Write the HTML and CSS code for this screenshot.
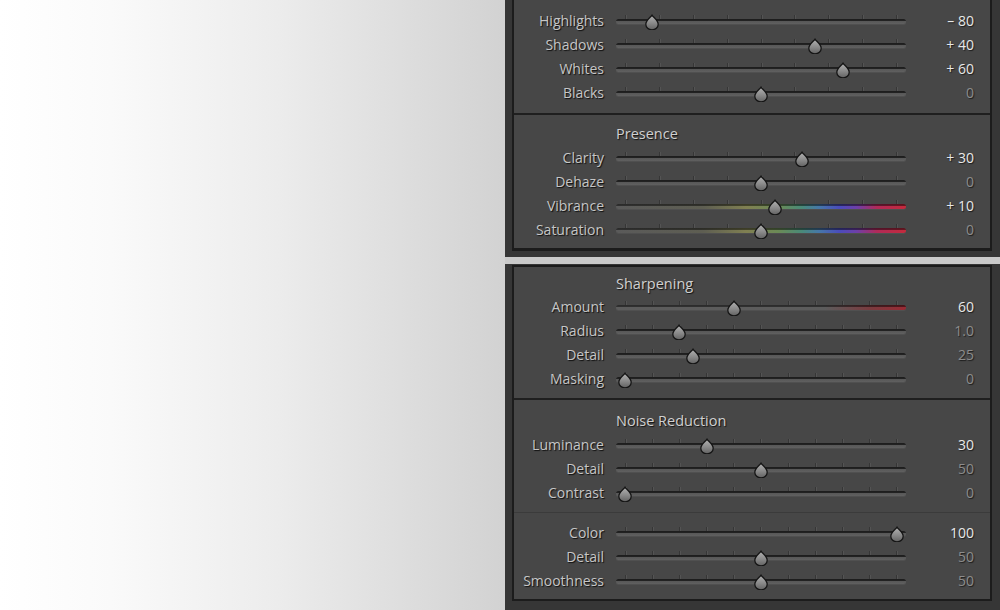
FILE: index.html
```html
<!DOCTYPE html>
<html>
<head>
<meta charset="utf-8">
<link rel="stylesheet" href="styles.css">
</head>
<body>
<svg class="defs" width="0" height="0" aria-hidden="true">
  <defs>
    <linearGradient id="tg" x1="0" y1="0" x2="0" y2="1">
      <stop offset="0" stop-color="#b4b4b4"/>
      <stop offset="0.55" stop-color="#8a8a8a"/>
      <stop offset="1" stop-color="#626262"/>
    </linearGradient>
    <symbol id="thumb" viewBox="0 0 16 16">
      <path d="M8 0.9 C8.9 3 14.2 6.2 14.2 10.2 A6.2 5.6 0 0 1 1.8 10.2 C1.8 6.2 7.1 3 8 0.9 Z" fill="url(#tg)" stroke="#151515" stroke-width="1.3" stroke-linejoin="round"/>
    </symbol>
  </defs>
</svg>
<div class="page">
  <div class="backdrop"></div>
  <div class="column">
    <div class="panel panel--cut">
      <div class="inner">
        <div class="section section--top">
          <div class="row"><span class="label">Highlights</span><div class="slider"><div class="ticks"><i></i><i></i><i></i><i></i><i></i><i></i><i></i><i></i><i></i></div><div class="track"></div><svg class="thumb" style="--p:.1"><use href="#thumb"/></svg></div><span class="value on">– 80</span></div>
          <div class="row"><span class="label">Shadows</span><div class="slider"><div class="ticks"><i></i><i></i><i></i><i></i><i></i><i></i><i></i><i></i><i></i></div><div class="track"></div><svg class="thumb" style="--p:.7"><use href="#thumb"/></svg></div><span class="value on">+ 40</span></div>
          <div class="row"><span class="label">Whites</span><div class="slider"><div class="ticks"><i></i><i></i><i></i><i></i><i></i><i></i><i></i><i></i><i></i></div><div class="track"></div><svg class="thumb" style="--p:.8"><use href="#thumb"/></svg></div><span class="value on">+ 60</span></div>
          <div class="row"><span class="label">Blacks</span><div class="slider"><div class="ticks"><i></i><i></i><i></i><i></i><i></i><i></i><i></i><i></i><i></i></div><div class="track"></div><svg class="thumb" style="--p:.5"><use href="#thumb"/></svg></div><span class="value">0</span></div>
        </div>
        <div class="section section--divided section--last">
          <div class="heading">Presence</div>
          <div class="row"><span class="label">Clarity</span><div class="slider"><div class="ticks"><i></i><i></i><i></i><i></i><i></i><i></i><i></i><i></i><i></i></div><div class="track"></div><svg class="thumb" style="--p:.65"><use href="#thumb"/></svg></div><span class="value on">+ 30</span></div>
          <div class="row"><span class="label">Dehaze</span><div class="slider"><div class="ticks"><i></i><i></i><i></i><i></i><i></i><i></i><i></i><i></i><i></i></div><div class="track"></div><svg class="thumb" style="--p:.5"><use href="#thumb"/></svg></div><span class="value">0</span></div>
          <div class="row"><span class="label">Vibrance</span><div class="slider"><div class="ticks"><i></i><i></i><i></i><i></i><i></i><i></i><i></i><i></i><i></i></div><div class="track track--hue"></div><svg class="thumb" style="--p:.55"><use href="#thumb"/></svg></div><span class="value on">+ 10</span></div>
          <div class="row"><span class="label">Saturation</span><div class="slider"><div class="ticks"><i></i><i></i><i></i><i></i><i></i><i></i><i></i><i></i><i></i></div><div class="track track--hue"></div><svg class="thumb" style="--p:.5"><use href="#thumb"/></svg></div><span class="value">0</span></div>
        </div>
      </div>
    </div>
    <div class="panel">
      <div class="inner">
        <div class="section">
          <div class="heading heading--first">Sharpening</div>
          <div class="row"><span class="label">Amount</span><div class="slider"><div class="ticks"><i></i><i></i><i></i><i></i><i></i><i></i><i></i><i></i><i></i><i></i><i></i></div><div class="track track--red"></div><svg class="thumb" style="--p:.4"><use href="#thumb"/></svg></div><span class="value on">60</span></div>
          <div class="row"><span class="label">Radius</span><div class="slider"><div class="ticks"><i></i><i></i><i></i><i></i><i></i><i></i><i></i><i></i><i></i><i></i><i></i></div><div class="track"></div><svg class="thumb" style="--p:.2"><use href="#thumb"/></svg></div><span class="value">1.0</span></div>
          <div class="row"><span class="label">Detail</span><div class="slider"><div class="ticks"><i></i><i></i><i></i><i></i><i></i><i></i><i></i><i></i><i></i><i></i><i></i></div><div class="track"></div><svg class="thumb" style="--p:.25"><use href="#thumb"/></svg></div><span class="value">25</span></div>
          <div class="row"><span class="label">Masking</span><div class="slider"><div class="ticks"><i></i><i></i><i></i><i></i><i></i><i></i><i></i><i></i><i></i><i></i><i></i></div><div class="track"></div><svg class="thumb" style="--p:0"><use href="#thumb"/></svg></div><span class="value">0</span></div>
        </div>
        <div class="section section--divided section--nr">
          <div class="heading">Noise Reduction</div>
          <div class="row"><span class="label">Luminance</span><div class="slider"><div class="ticks"><i></i><i></i><i></i><i></i><i></i><i></i><i></i><i></i><i></i><i></i><i></i></div><div class="track"></div><svg class="thumb" style="--p:.3"><use href="#thumb"/></svg></div><span class="value on">30</span></div>
          <div class="row"><span class="label">Detail</span><div class="slider"><div class="ticks"><i></i><i></i><i></i><i></i><i></i><i></i><i></i><i></i><i></i><i></i><i></i></div><div class="track"></div><svg class="thumb" style="--p:.5"><use href="#thumb"/></svg></div><span class="value">50</span></div>
          <div class="row"><span class="label">Contrast</span><div class="slider"><div class="ticks"><i></i><i></i><i></i><i></i><i></i><i></i><i></i><i></i><i></i><i></i><i></i></div><div class="track"></div><svg class="thumb" style="--p:0"><use href="#thumb"/></svg></div><span class="value">0</span></div>
        </div>
        <div class="section section--faint section--last">
          <div class="row"><span class="label">Color</span><div class="slider"><div class="ticks"><i></i><i></i><i></i><i></i><i></i><i></i><i></i><i></i><i></i><i></i><i></i></div><div class="track"></div><svg class="thumb" style="--p:1"><use href="#thumb"/></svg></div><span class="value on">100</span></div>
          <div class="row"><span class="label">Detail</span><div class="slider"><div class="ticks"><i></i><i></i><i></i><i></i><i></i><i></i><i></i><i></i><i></i><i></i><i></i></div><div class="track"></div><svg class="thumb" style="--p:.5"><use href="#thumb"/></svg></div><span class="value">50</span></div>
          <div class="row"><span class="label">Smoothness</span><div class="slider"><div class="ticks"><i></i><i></i><i></i><i></i><i></i><i></i><i></i><i></i><i></i><i></i><i></i></div><div class="track"></div><svg class="thumb" style="--p:.5"><use href="#thumb"/></svg></div><span class="value">50</span></div>
        </div>
      </div>
    </div>
  </div>
</div>
</body>
</html>
```
FILE: styles.css
```css
* { box-sizing: border-box; }
html, body { margin: 0; padding: 0; }
body {
  width: 1000px;
  height: 610px;
  overflow: hidden;
  font-family: "Open Sans", "Noto Sans", sans-serif;
  background: #cbcbcb;
}
.defs { position: absolute; width: 0; height: 0; }
.page {
  display: flex;
  width: 1000px;
  height: 610px;
}
.backdrop {
  width: 505px;
  flex: none;
  background: linear-gradient(90deg, #ffffff 0%, #fafafa 22%, #ececec 55%, #d2d2d2 100%);
}
.column {
  width: 495px;
  flex: none;
  display: flex;
  flex-direction: column;
  gap: 7px;
  background: #cacaca;
}
.panel {
  background: #363636;
  padding: 1px 8px 11px 7px;
  flex: 1;
}
.panel--cut {
  flex: none;
  padding-top: 0;
  padding-bottom: 6px;
}
.inner {
  background: #474747;
  border: 2px solid #1c1c1c;
  height: 100%;
}
.panel--cut .inner {
  border-top: 0;
  border-bottom-width: 3px;
}
.section {
  padding: 8px 16px 7px 0;
}
.section--top { padding-top: 9px; padding-bottom: 8px; }
.section--last { padding-bottom: 6px; }
.section--divided {
  border-top: 2px solid #1f1f1f;
  padding-top: 0;
}
.section--nr { padding-top: 2px; }
.section--faint {
  border-top: 1px solid #3b3b3b;
}
.heading {
  margin-left: 102px;
  padding: 8px 0 1px;
  line-height: 22px;
  font-size: 14.5px;
  color: #d0d0d0;
  text-shadow: 1px 1px 1px rgba(0, 0, 0, 0.75);
}
.section .heading.heading--first {
  margin-top: -8px;
  padding-top: 6px;
  padding-bottom: 0;
}
.row {
  display: flex;
  align-items: center;
  height: 24px;
}
.label {
  width: 90px;
  flex: none;
  text-align: right;
  font-size: 14px;
  color: #c6c6c6;
  text-shadow: 1px 1px 1px rgba(0, 0, 0, 0.8);
  line-height: 24px;
}
.slider {
  position: relative;
  width: 290px;
  height: 24px;
  margin-left: 12px;
  flex: none;
  padding-top: 6px;
}
.ticks {
  display: flex;
  justify-content: space-between;
  height: 4px;
  margin: 0 9px;
}
.ticks i {
  display: block;
  width: 1px;
  height: 4px;
  background: #363636;
  box-shadow: 1px 0 0 #545454;
}
.track {
  height: 5px;
  border-radius: 3px;
  background: linear-gradient(#1c1c1c 0, #242424 40%, #575757 40%, #606060 100%);
  box-shadow: 0 1px 0 rgba(255, 255, 255, 0.05);
}
.track--hue {
  background:
    linear-gradient(rgba(0,0,0,.55) 0, rgba(0,0,0,.45) 40%, rgba(0,0,0,0) 40%),
    linear-gradient(90deg, #5a5a5a 0%, #5e5e52 30%, #808052 45%, #6b8a56 56%, #4a8a78 64%, #4678a8 70%, #4a4cbc 77%, #6e3fa8 83%, #b02a58 90%, #c42a3c 100%);
}
.track--red {
  background:
    linear-gradient(rgba(0,0,0,.55) 0, rgba(0,0,0,.45) 40%, rgba(0,0,0,0) 40%),
    linear-gradient(90deg, #5c5c5c 0%, #5c5c5c 72%, #7a3a3e 88%, #9a2a34 100%);
}
.thumb {
  position: absolute;
  top: 5px;
  left: calc(1px + var(--p) * (100% - 18px));
  width: 16px;
  height: 16px;
  overflow: visible;
}
.value {
  width: 68px;
  flex: none;
  text-align: right;
  font-size: 14px;
  line-height: 24px;
  color: #8c8c8c;
  text-shadow: 1px 1px 1px rgba(0, 0, 0, 0.6);
}
.value.on { color: #e8e8e8; }
```
